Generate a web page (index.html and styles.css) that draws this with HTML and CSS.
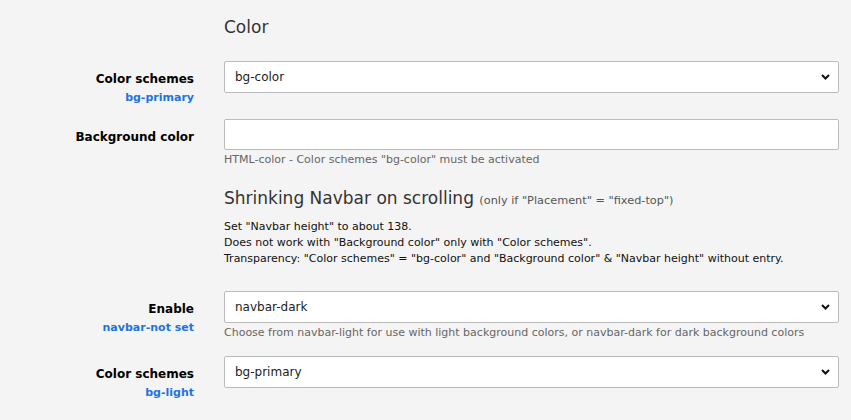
FILE: index.html
```html
<!DOCTYPE html>
<html lang="en">
<head>
<meta charset="utf-8">
<title>Color</title>
<link rel="stylesheet" href="styles.css">
</head>
<body>
<main class="page">
  <div class="row heading-row">
    <div></div>
    <h2 class="section-title">Color</h2>
  </div>

  <div class="row field first-field">
    <div class="label"><span class="name">Color schemes</span><span class="code">bg-primary</span></div>
    <div class="control">
      <div class="select"><span>bg-color</span><svg class="chev" width="9" height="6" viewBox="0 0 9 6"><polyline points="1,1 4.5,4.5 8,1" fill="none" stroke="#111" stroke-width="2"/></svg></div>
    </div>
  </div>

  <div class="row field bg-field">
    <div class="label"><span class="name">Background color</span></div>
    <div class="control">
      <div class="input"></div>
      <div class="help">HTML-color - Color schemes "bg-color" must be activated</div>
    </div>
  </div>

  <div class="row heading-row second-heading">
    <div></div>
    <div>
      <h2 class="section-title">Shrinking Navbar on scrolling <small>(only if "Placement" = "fixed-top")</small></h2>
      <div class="desc">
        <div>Set "Navbar height" to about 138.</div>
        <div>Does not work with "Background color" only with "Color schemes".</div>
        <div>Transparency: "Color schemes" = "bg-color" and "Background color" &amp; "Navbar height" without entry.</div>
      </div>
    </div>
  </div>

  <div class="row field enable-field">
    <div class="label"><span class="name">Enable</span><span class="code">navbar-not set</span></div>
    <div class="control">
      <div class="select"><span>navbar-dark</span><svg class="chev" width="9" height="6" viewBox="0 0 9 6"><polyline points="1,1 4.5,4.5 8,1" fill="none" stroke="#111" stroke-width="2"/></svg></div>
      <div class="help">Choose from navbar-light for use with light background colors, or navbar-dark for dark background colors</div>
    </div>
  </div>

  <div class="row field last-field">
    <div class="label"><span class="name">Color schemes</span><span class="code">bg-light</span></div>
    <div class="control">
      <div class="select"><span>bg-primary</span><svg class="chev" width="9" height="6" viewBox="0 0 9 6"><polyline points="1,1 4.5,4.5 8,1" fill="none" stroke="#111" stroke-width="2"/></svg></div>
    </div>
  </div>
</main>
</body>
</html>
```

FILE: styles.css
```css
html, body {
  margin: 0;
  padding: 0;
  background: #f4f4f4;
}
body {
  font-family: "DejaVu Sans", Verdana, sans-serif;
  font-size: 11px;
  color: #000;
  width: 851px;
  height: 420px;
  overflow: hidden;
}
.page {
  padding-top: 15px;
}
.row {
  display: grid;
  grid-template-columns: 194px 615px;
  column-gap: 30px;
  align-items: start;
}
.section-title {
  margin: 0;
  font-weight: normal;
  font-size: 17px;
  line-height: 24px;
  color: #333;
}
.section-title small {
  font-size: 11.3px;
  color: #555;
}
.second-heading {
  margin-top: 18px;
}
.desc {
  margin-top: 6px;
  line-height: 16px;
  color: #111;
}
.label {
  display: flex;
  flex-direction: column;
  align-items: flex-end;
  text-align: right;
  padding-top: 10px;
}
.label .name {
  font-weight: bold;
  font-size: 12px;
  line-height: 16px;
  color: #000;
}
.label .code {
  font-weight: bold;
  line-height: 16px;
  margin-top: 3px;
  color: #1c74e3;
}
.first-field { margin-top: 22px; }
.bg-field { margin-top: 13px; }
.enable-field { margin-top: 24px; }
.last-field { margin-top: 15px; }
.select, .input {
  box-sizing: border-box;
  height: 32px;
  background: #fff;
  border: 1px solid #bbb;
  border-radius: 2px;
}
.input {
  height: 31px;
}
.select {
  display: flex;
  align-items: center;
  justify-content: space-between;
  padding: 0 8px 0 10px;
  font-size: 12px;
  color: #222;
}
.chev {
  display: block;
}
.help {
  margin-top: 2px;
  line-height: 16px;
  color: #666;
}
```
